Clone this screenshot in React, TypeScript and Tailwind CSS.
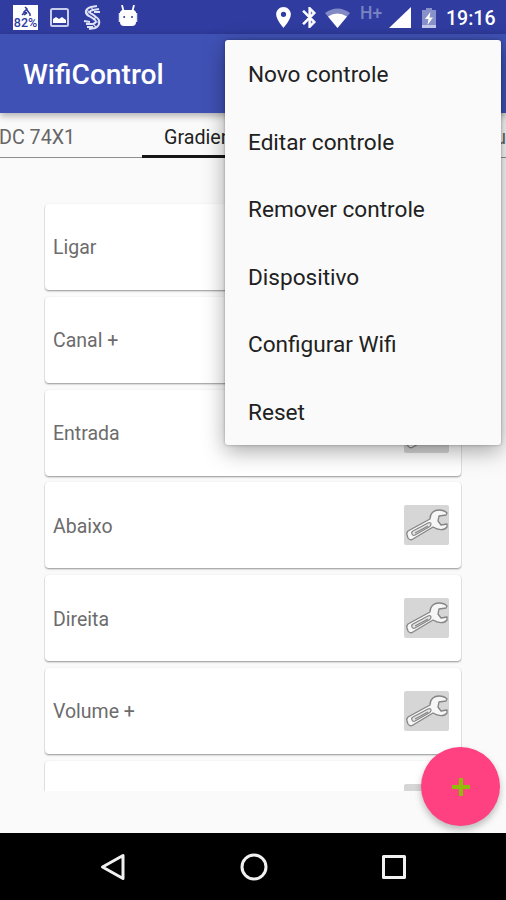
import React from 'react';

const menuItems = [
  'Novo controle',
  'Editar controle',
  'Remover controle',
  'Dispositivo',
  'Configurar Wifi',
  'Reset',
];

const controls = ['Ligar', 'Canal +', 'Entrada', 'Abaixo', 'Direita', 'Volume +', ''];

const StatusBar: React.FC = () => (
  <div className="flex h-[34px] shrink-0 items-start justify-between bg-[#303c9f] pl-[13px] pr-[11px] text-white">
    <div className="flex items-start">
      <div className="mt-[5px] flex h-[25px] w-[25px] flex-col items-center overflow-hidden bg-white text-[#303c9f]">
        <svg className="mt-px h-[11px] w-[10px] shrink-0" viewBox="0 0 10 11" fill="none" stroke="currentColor" strokeWidth="1.5">
          <path d="M4 1l2 2-3 3 3 1M4 6L1 9M6 4l3 4v2M3 9l3-2" />
        </svg>
        <span className="whitespace-nowrap font-[Roboto] text-[12.500px] font-medium leading-[12px]">82%</span>
      </div>
      <svg className="ml-[12px] mt-[8px] h-[19px] w-[19px]" viewBox="0 0 19 19">
        <rect x="1" y="1" width="17" height="17" rx="1.5" fill="none" stroke="#c9cdec" strokeWidth="2" />
        <path d="M3 15v-4l3-2 3 2 3-2 4 3v3z" fill="#fff" />
      </svg>
      <svg className="ml-[14px] mt-[5px] h-[26px] w-[20px]" viewBox="0 0 20 26" fill="none" stroke="#dfe3f6" strokeWidth="2">
        <path d="M14 1L8 2C1 4 2 9 6 11l5 3c3 2 2 4-1 5H3" />
        <path d="M16 4l-6 1C6 6 6 8 9 9l4 3c5 3 4 9-1 11l-6 1" />
        <path d="M17 7h-6M1 16l6 1M4 22h6" />
        <path d="M3 5l4 2M3 9l4-2M13 12l-3 3M16 17h-4M13 22l-3-3M8 2l2 3" strokeWidth="1.2" />
      </svg>
      <svg className="ml-[15px] mt-[5px] h-[22px] w-[20px]" viewBox="0 0 20 22">
        <path d="M4 0l1.500 6M16 0l-1.500 6" stroke="#fff" strokeWidth="1.8" />
        <path d="M2 7l2-2h12l2 2v10q0 4-4 4H6q-4 0-4-4z" fill="#fff" />
        <path d="M1.500 8v9M18.500 8v9" stroke="#e5e8fa" strokeWidth="1.5" />
        <circle cx="6.2" cy="12" r="1" fill="#303c9f" />
        <circle cx="14" cy="12" r="1" fill="#303c9f" />
      </svg>
    </div>

    <div className="flex items-start">
      <svg className="mt-[7px] h-[21px] w-[15px]" viewBox="5 2 14 20" fill="currentColor">
        <path d="M12 2C8.13 2 5 5.13 5 9c0 5.25 7 13 7 13s7-7.75 7-13c0-3.87-3.13-7-7-7zm0 9.5a2.5 2.5 0 0 1 0-5 2.5 2.5 0 0 1 0 5z" />
      </svg>
      <svg
        className="ml-[11px] mt-[7px] h-[21px] w-[14px]"
        viewBox="4.500 2 13.500 20"
        preserveAspectRatio="none"
        fill="currentColor"
        stroke="currentColor"
        strokeWidth="0.6"
      >
        <path d="M17.71 7.71L12 2h-1v7.59L6.41 5 5 6.41 10.59 12 5 17.59 6.41 19 11 14.41V22h1l5.71-5.71-4.3-4.29 4.3-4.29zM13 5.83l1.88 1.88L13 9.59V5.83zm1.88 10.46L13 18.17v-3.76l1.88 1.88z" />
      </svg>
      <svg className="ml-[9px] mt-[8px] h-[20px] w-[25px]" viewBox="0 0 25 20" fill="currentColor">
        <path d="M0 5Q12.500-4 25 5L12.500 20z" opacity=".4" />
        <path d="M3 8.500Q12.500 2.500 22 8.500L12.500 20z" />
      </svg>
      <span className="ml-[10px] mt-[4px] w-[23px] font-[Roboto] text-[17.500px] font-medium leading-[18px] text-[#7982c2]">
        H+
      </span>
      <svg className="ml-[6px] mt-[7px] h-[21px] w-[22px]" viewBox="0 0 22 21" fill="currentColor">
        <path d="M22 0v21H0z" />
      </svg>
      <svg className="ml-[11px] mt-[8px] h-[20px] w-[14px]" viewBox="0 0 14 20">
        <path d="M4 0h6v2h4v18H0V2h4z" fill="#8991ca" />
        <path d="M0 17h14v3H0z" fill="#c6caeb" />
        <path d="M8.500 4L3 11h3.500L5.500 17 11 9.500H7.500z" fill="#fff" />
      </svg>
      <span className="ml-[10px] mt-[8px] w-[49px] whitespace-nowrap font-[Roboto] text-[19.500px] font-medium leading-[22px]">
        19:16
      </span>
    </div>
  </div>
);

const Wrench: React.FC = () => (
  <svg className="h-[40px] w-[45px] shrink-0" viewBox="0 0 45 40">
    <rect width="45" height="40" rx="2" fill="#d6d6d6" />
    <path
      d="M4 26L26 14C26 8 30 5 35 5q5 0 8 3l-1 2-7 1-1 5 3 4 6-1v3c-3 4-9 3-14 0L9 34q-3 2-5-1l-1-3q-1-2 1-4z"
      fill="#f6f6f6"
      stroke="#858585"
      strokeWidth="1.3"
      strokeLinejoin="round"
    />
    <path
      d="M9 26l15-8q3-1 3 1t-2 3L11 30q-2 1-3-1-1-2 1-3zM11 28l13-7"
      fill="#e5e5e5"
      stroke="#858585"
      strokeWidth="1.2"
    />
  </svg>
);

const App: React.FC = () => {
  return (
    <div className="relative flex h-[900px] w-[506px] flex-col overflow-hidden bg-[#fafafa] font-[Roboto,sans-serif]">
      <StatusBar />

      <header className="z-10 flex h-[79px] shrink-0 items-center bg-[#3f51b5] pl-[23px] pt-[3px] shadow-[0_3px_7px_rgba(0,0,0,0.3)]">
        <h1 className="text-[28.200px] font-medium text-white">WifiControl</h1>
      </header>

      {/* Tabs */}
      <nav className="flex h-[45px] shrink-0 border-b border-[#8e8e8e] text-[19.700px] leading-[50px]">
        <span className="w-[142px] whitespace-nowrap text-[#666]">
          <span className="-ml-px">DC 74X1</span>
        </span>
        <span className="h-[45px] w-[222px] border-b-[3px] border-[#161616] pl-[22px] text-[#222]">Gradiente</span>
        <span className="grow text-right text-[#666]">u</span>
      </nav>

      {/* Controls */}
      <main className="mx-[44px] mt-[45px] flex h-[588px] shrink-0 flex-col gap-[6.800px] overflow-hidden px-px pt-px">
        {controls.map((name, i) => (
          <div
            key={i}
            className="flex h-[86px] shrink-0 items-center justify-between rounded-[4px] bg-white pl-[8px] pr-[12px] shadow-[0_1px_2px_rgba(0,0,0,0.42)]"
          >
            <span className="pt-[2px] text-[19.500px] text-[#6c6c6c]">{name}</span>
            <Wrench />
          </div>
        ))}
      </main>

      {/* Android navigation */}
      <footer className="mt-auto flex h-[67px] shrink-0 items-center justify-between bg-black pl-[100px] pr-[99px]">
        <svg className="h-[28px] w-[26px]" viewBox="0 0 26 28" fill="none" stroke="#f1f1f1" strokeWidth="3" strokeLinejoin="round">
          <path d="M23 2.500v23L2.500 14z" />
        </svg>
        <svg className="h-[28px] w-[28px]" viewBox="0 0 28 28" fill="none" stroke="#f1f1f1" strokeWidth="3">
          <circle cx="14" cy="14" r="12" />
        </svg>
        <svg className="h-[26px] w-[26px]" viewBox="0 0 26 26" fill="none" stroke="#f1f1f1" strokeWidth="3" strokeLinejoin="round">
          <rect x="2.500" y="2.500" width="21" height="21" />
        </svg>
      </footer>

      <button className="absolute left-[421px] top-[747px] z-20 flex h-[79px] w-[79px] items-center justify-center rounded-full bg-[#ff4081] shadow-[0_4px_7px_rgba(0,0,0,0.25)]">
        <svg className="h-[20px] w-[20px]" viewBox="0 0 20 20" stroke="#8fbc08" strokeWidth="4">
          <path d="M10 1v18M1 10h18" />
        </svg>
      </button>

      <div className="absolute left-[225px] top-[40px] z-30 flex w-[276px] flex-col rounded-[3px] bg-[#fafafa] shadow-[0_6px_22px_rgba(0,0,0,0.35),0_0_3px_rgba(0,0,0,0.3)]">
        {menuItems.map((item) => (
          <span key={item} className="flex h-[67.500px] items-center pl-[23px] pt-[3px] text-[22.600px] text-[#212121]">
            {item}
          </span>
        ))}
      </div>
    </div>
  );
};

export default App;
